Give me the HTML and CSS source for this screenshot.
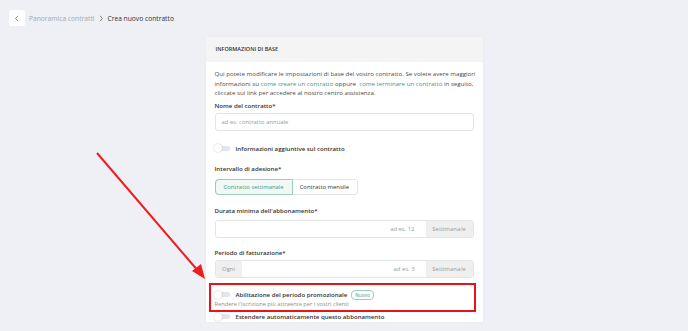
FILE: index.html
```html
<!DOCTYPE html>
<html lang="it">
  <head>
    <meta charset="UTF-8" />
    <meta name="viewport" content="width=device-width, initial-scale=1.0" />
    <title>Crea nuovo contratto</title>
    <link rel="stylesheet" href="styles.css">
  </head>
  <body>
    <div class="topbar">
      <div class="back-btn">
        <svg width="6" height="7" viewBox="0 0 6 7">
          <path d="M4 0.8 L1.6 3.5 L4 6.2" fill="none" stroke="#888" stroke-width="1" />
        </svg>
      </div>
      <span class="crumb">Panoramica contratti</span>
      <svg class="crumb-sep" width="6" height="7" viewBox="0 0 6 7">
        <path d="M2 0.8 L4.4 3.5 L2 6.2" fill="none" stroke="#777" stroke-width="0.9" />
      </svg>
      <span class="crumb current">Crea nuovo contratto</span>
    </div>

    <div class="card">
      <div class="card-header">INFORMAZIONI DI BASE</div>
      <div class="card-body">
        <p class="intro">
          Qui potete modificare le impostazioni di base del vostro contratto. Se volete avere maggiori<br>
          informazioni su <a href="#">come creare un contratto</a> oppure &nbsp;<a href="#">come terminare un contratto</a> in seguito,<br>
          cliccate sui link per accedere al nostro centro assistenza.
        </p>

        <div class="label">Nome del contratto*</div>
        <div class="input">
          <span class="placeholder">ad es. contratto annuale</span>
        </div>

        <div class="toggle-row first-toggle">
          <span class="toggle"></span>
          <span class="toggle-text">Informazioni aggiuntive sul contratto</span>
        </div>

        <div class="label spaced">Intervallo di adesione*</div>
        <div class="segmented">
          <div class="segment active">Contratto settimanale</div>
          <div class="segment">Contratto mensile</div>
        </div>

        <div class="label spaced">Durata minima dell'abbonamento*</div>
        <div class="input-group">
          <div class="field right"><span class="placeholder">ad es. 12</span></div>
          <div class="addon addon-right">Settimana/e</div>
        </div>

        <div class="label spaced tight">Periodo di fatturazione*</div>
        <div class="input-group">
          <div class="addon addon-left">Ogni</div>
          <div class="field right"><span class="placeholder">ad es. 3</span></div>
          <div class="addon addon-right">Settimana/e</div>
        </div>

        <div class="promo">
          <div class="toggle-row">
            <span class="toggle"></span>
            <span class="toggle-text">Abilitazione del periodo promozionale</span>
            <span class="badge">Nuovo</span>
          </div>
          <div class="promo-sub">Rendere l'iscrizione più attraente per i vostri clienti</div>
          <span class="highlight"></span>
        </div>

        <div class="toggle-row last-toggle">
          <span class="toggle"></span>
          <span class="toggle-text">Estendere automaticamente questo abbonamento</span>
        </div>
      </div>
    </div>

    <svg class="arrow" width="688" height="331" viewBox="0 0 688 331">
      <line x1="97" y1="153" x2="199" y2="272" stroke="#ee1c1c" stroke-width="2" />
      <path d="M205 279 L192 271 L201 264 Z" fill="#ee1c1c" />
    </svg>
  </body>
</html>
```

FILE: styles.css
```css
* {
  box-sizing: border-box;
  --teal: #3a9a88;
  --text: #4a4a4a;
  --muted: #9a9a9a;
  --border: #e2e4e6;
}
body {
  margin: 0;
  font-family: "Open Sans", sans-serif;
  background-color: #eef0f5;
  color: var(--text);
  height: 331px;
  overflow: hidden;
}
.topbar {
  display: flex;
  align-items: center;
  padding: 10px 9px 0;
  height: 26px;
}
.back-btn {
  width: 16px;
  height: 16px;
  background: white;
  border-radius: 2px;
  display: flex;
  align-items: center;
  justify-content: center;
  margin-right: 4px;
}
.crumb {
  font-size: 6.7px;
  color: #a5a8ad;
}
.crumb.current {
  color: #333;
}
.crumb-sep {
  margin: 0 3px 0 4px;
}
.card {
  width: 277px;
  margin: 11px auto 0;
  background: white;
  border-radius: 3px 3px 0 0;
  box-shadow: 0 0 3px rgba(0, 0, 0, 0.04);
}
.card-header {
  height: 25px;
  background: #f4f4f4;
  border-radius: 3px 3px 0 0;
  padding: 0 10px;
  font-size: 5.5px;
  font-weight: 600;
  color: #333;
  line-height: 25px;
}
.card-body {
  padding: 7px 9px 0;
}
.intro {
  margin: 0;
  font-size: 6.15px;
  line-height: 9.5px;
  white-space: nowrap;
  color: var(--text);
}
.intro a {
  color: var(--teal);
  text-decoration: none;
}
.label {
  font-size: 6.1px;
  font-weight: 600;
  color: #333;
  line-height: 9.5px;
  margin-top: 3px;
  margin-bottom: 3px;
}
.label.spaced {
  margin-top: 11px;
  margin-bottom: 5px;
}
.label.spaced.tight {
  margin-top: 10px;
  margin-bottom: 2px;
}
.input {
  height: 18px;
  border: 1px solid var(--border);
  border-radius: 3px;
  display: flex;
  align-items: center;
  padding: 0 6px;
}
.placeholder {
  font-size: 5.9px;
  color: var(--muted);
}
.toggle-row {
  display: flex;
  align-items: center;
  height: 10px;
}
.first-toggle {
  margin-top: 12px;
}
.last-toggle {
  margin-top: 4px;
}
.toggle {
  position: relative;
  width: 15px;
  height: 5px;
  border-radius: 3px;
  background: #e4e5e8;
  margin-right: 6px;
  flex: none;
}
.toggle::before {
  content: "";
  position: absolute;
  left: -1px;
  top: -1.5px;
  width: 8px;
  height: 8px;
  border-radius: 50%;
  background: white;
  box-shadow: 0 0 1.5px rgba(0, 0, 0, 0.3);
}
.toggle-text {
  font-size: 6.1px;
  font-weight: 600;
  color: #333;
}
.segmented {
  display: flex;
  width: fit-content;
  height: 16px;
  border: 1px solid var(--border);
  border-radius: 3px;
}
.segment {
  font-size: 5.9px;
  color: #333;
  display: flex;
  align-items: center;
  padding: 0 8px;
}
.segment.active {
  background: #f1f8f6;
  color: var(--teal);
  outline: 1px solid #9ccbbf;
  border-radius: 3px 0 0 3px;
}
.input-group {
  display: flex;
  height: 18px;
  border: 1px solid var(--border);
  border-radius: 3px;
  overflow: hidden;
}
.field {
  flex: 1;
  display: flex;
  align-items: center;
  padding: 0 11px;
}
.field.right {
  justify-content: flex-end;
}
.addon {
  background: #efefef;
  color: var(--muted);
  font-size: 5.9px;
  display: flex;
  align-items: center;
  justify-content: center;
}
.addon-right {
  width: 47px;
}
.addon-left {
  width: 26px;
}
.promo {
  position: relative;
  margin-top: 12px;
}
.badge {
  margin-left: 4px;
  font-size: 4.7px;
  color: var(--teal);
  border: 1px solid #9ccbbf;
  border-radius: 4px;
  padding: 0 3px;
  height: 10px;
  line-height: 8px;
}
.promo-sub {
  font-size: 5.7px;
  color: #8d8d8d;
  line-height: 8px;
}
.highlight {
  position: absolute;
  top: -7px;
  bottom: -4px;
  left: -6px;
  right: -2px;
  border: 2px solid #e8141c;
}
.arrow {
  position: absolute;
  top: 0;
  left: 0;
  pointer-events: none;
}
```
